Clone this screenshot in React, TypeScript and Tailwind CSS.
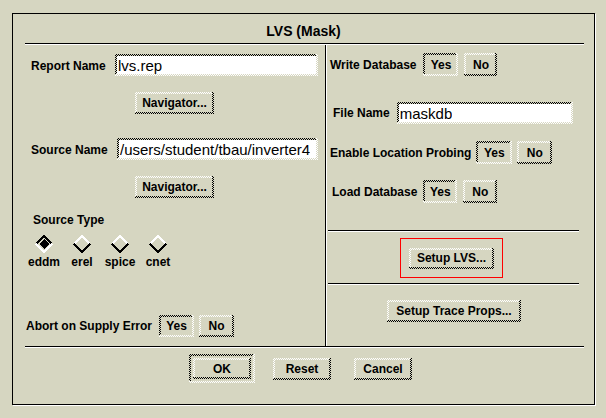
import React from "react";

// motif-ish stipple bevels
const lightDots =
  "bg-[#d6d6c1] bg-[image:repeating-conic-gradient(#fff_0%_25%,transparent_0%_50%)] bg-[length:2px_2px]";
const darkDots =
  "bg-[#d6d6c1] bg-[image:repeating-conic-gradient(#000_0%_25%,transparent_0%_50%)] bg-[length:2px_2px]";

const Bevel: React.FC<{
  sunken?: boolean;
  className: string;
  inner?: string;
  children?: React.ReactNode;
}> = ({ sunken, className, inner = "bg-[#d6d6c1]", children }) => (
  <div className={`flex shrink-0 ${sunken ? lightDots : darkDots} ${className}`}>
    <div className={`flex flex-1 mr-[2px] mb-[2px] ${sunken ? darkDots : lightDots}`}>
      <div className={`flex flex-1 ml-[2px] mt-[2px] ${inner}`}>{children}</div>
    </div>
  </div>
);

const Btn: React.FC<{ label: string; sunken?: boolean; className: string }> = ({
  label,
  sunken,
  className,
}) => (
  <Bevel sunken={sunken} className={className}>
    <span className="m-auto text-[12px] font-bold leading-[14px] whitespace-nowrap">{label}</span>
  </Bevel>
);

const Field: React.FC<{ value: string; className: string }> = ({ value, className }) => (
  <Bevel sunken className={className} inner="bg-white items-center">
    <span className="pl-px text-[15px] leading-[17px] whitespace-nowrap overflow-hidden">{value}</span>
  </Bevel>
);

const Diamond: React.FC<{ on?: boolean }> = ({ on }) => (
  <svg width="18" height="18" viewBox="0 0 18 18" shapeRendering="crispEdges">
    <polyline points="1,9 9,1 17,9" fill="none" stroke={on ? "#000" : "#fff"} strokeWidth="1.6" />
    <polyline points="1,9 9,17 17,9" fill="none" stroke={on ? "#fff" : "#000"} strokeWidth="1.6" />
    {on && <polygon points="9,4 14,9 9,14 4,9" fill="#000" />}
  </svg>
);

const Label: React.FC<{ children: React.ReactNode; className?: string }> = ({ children, className = "" }) => (
  <span className={`text-[12px] font-bold leading-[14px] whitespace-nowrap ${className}`}>{children}</span>
);

const Rule: React.FC<{ className: string }> = ({ className }) => (
  <div className={`h-[2px] border-t border-t-black border-b border-b-white ${className}`} />
);

export default function App() {
  return (
    <div className="w-[606px] h-[418px] bg-[#d6d6c1] pt-[13px] pl-[12px] font-['Liberation_Sans',Arial,sans-serif] text-black">
      <div className="w-[583px] h-[392px] border border-black shadow-[1px_1px_0_#fff] flex flex-col">
        <div className="h-[29px] pt-[9px] text-center text-[14px] font-bold leading-[16px]">LVS (Mask)</div>
        <Rule className="ml-[12px] w-[559px]" />

        <div className="flex h-[301px]">
          {/* left column */}
          <div className="w-[312px] flex flex-col">
            <div className="mt-[9px] h-[22px] flex items-center justify-between pl-[18px] pr-[7px]">
              <Label className="pt-[2px]">Report Name</Label>
              <Field value="lvs.rep" className="w-[203px] h-[22px]" />
            </div>
            <Btn label="Navigator..." className="mt-[16px] ml-[122px] w-[79px] h-[22px]" />
            <div className="mt-[24px] h-[22px] flex items-center justify-between pl-[18px] pr-[7px]">
              <Label className="pt-[2px]">Source Name</Label>
              <Field value="/users/student/tbau/inverter4" className="w-[201px] h-[22px]" />
            </div>
            <Btn label="Navigator..." className="mt-[16px] ml-[122px] w-[79px] h-[22px]" />
            <Label className="mt-[15px] ml-[20px]">Source Type</Label>
            <div className="mt-[8px] ml-[12px] flex">
              {["eddm", "erel", "spice", "cnet"].map((t, i) => (
                <div key={t} className="w-[38px] flex flex-col items-center">
                  <Diamond on={i === 0} />
                  <Label className="mt-[2px]">{t}</Label>
                </div>
              ))}
            </div>
            <div className="mt-auto mb-[9px] pl-[13px] flex items-center">
              <Label>Abort on Supply Error</Label>
              <Btn label="Yes" sunken className="ml-[7px] w-[35px] h-[22px]" />
              <Btn label="No" className="ml-[5px] w-[35px] h-[22px]" />
            </div>
          </div>

          <div className="w-[2px] border-l border-l-black border-r border-r-white" />

          {/* right column */}
          <div className="flex-1 flex flex-col">
            <div className="mt-[8px] h-[23px] flex items-center pl-[3px]">
              <Label>Write Database</Label>
              <Btn label="Yes" sunken className="ml-[7px] w-[35px] h-[23px]" />
              <Btn label="No" className="ml-[6px] w-[33px] h-[23px]" />
            </div>
            <div className="mt-[26px] h-[22px] flex items-center pl-[6px]">
              <Label>File Name</Label>
              <Field value="maskdb" className="ml-[7px] w-[176px] h-[22px]" />
            </div>
            <div className="mt-[17px] h-[23px] flex items-center pl-[3px]">
              <Label>Enable Location Probing</Label>
              <Btn label="Yes" sunken className="ml-[5px] w-[36px] h-[23px]" />
              <Btn label="No" className="ml-[5px] w-[35px] h-[23px]" />
            </div>
            <div className="mt-[16px] h-[23px] flex items-center pl-[5px]">
              <Label>Load Database</Label>
              <Btn label="Yes" sunken className="ml-[6px] w-[34px] h-[23px]" />
              <Btn label="No" className="ml-[6px] w-[34px] h-[23px]" />
            </div>
            <Rule className="mt-[27px] ml-px w-[251px]" />
            <div className="mt-[6px] ml-[73px] w-[103px] h-[40px] border border-[#ff0000] flex items-center justify-center">
              <Btn label="Setup LVS..." className="w-[85px] h-[21px]" />
            </div>
            <Rule className="mt-[5px] ml-px w-[251px]" />
            <Btn label="Setup Trace Props..." className="mt-[15px] ml-[60px] w-[134px] h-[22px]" />
          </div>
        </div>

        <Rule className="ml-[12px] w-[559px]" />

        <div className="mt-[6px] pl-[176px] flex items-center">
          <Bevel sunken className="w-[66px] h-[29px]" inner="bg-[#d6d6c1] p-[2px]">
            <Btn label="OK" className="w-[58px] h-[21px]" />
          </Bevel>
          <Btn label="Reset" className="ml-[18px] w-[58px] h-[22px]" />
          <Btn label="Cancel" className="ml-[23px] w-[58px] h-[22px]" />
        </div>
      </div>
    </div>
  );
}
